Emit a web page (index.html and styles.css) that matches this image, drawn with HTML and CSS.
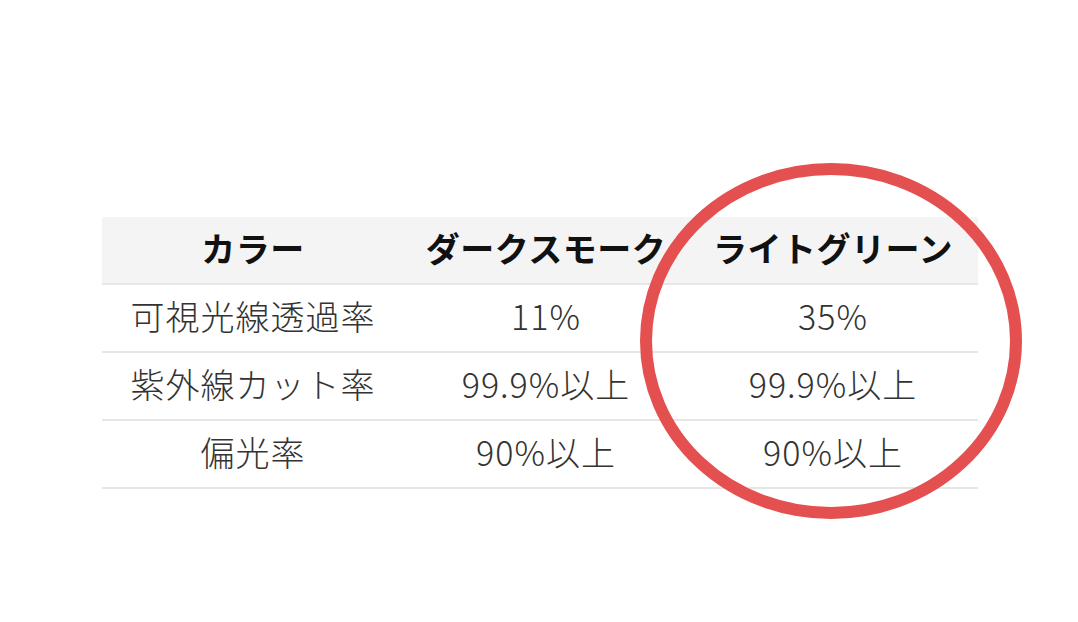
FILE: index.html
```html
<!DOCTYPE html>
<html lang="ja">
<head>
    <meta charset="UTF-8">
    <meta name="viewport" content="width=device-width, initial-scale=1.0">
    <title>カラー比較</title>
    <link rel="stylesheet" href="styles.css">
</head>
<body>
    <div class="wrap">
        <table class="spec-table">
            <thead>
                <tr>
                    <th class="col-label">カラー</th>
                    <th class="col-dark">ダークスモーク</th>
                    <th class="col-green">ライトグリーン</th>
                </tr>
            </thead>
            <tbody>
                <tr>
                    <td>可視光線透過率</td>
                    <td>11%</td>
                    <td>35%</td>
                </tr>
                <tr>
                    <td>紫外線カット率</td>
                    <td>99.9%以上</td>
                    <td>99.9%以上</td>
                </tr>
                <tr>
                    <td>偏光率</td>
                    <td>90%以上</td>
                    <td>90%以上</td>
                </tr>
            </tbody>
        </table>

        <!-- 強調の赤丸 -->
        <svg class="highlight" width="400" height="372" viewBox="0 0 400 372">
            <ellipse cx="200" cy="186" rx="185" ry="172" fill="none" stroke="#e4504f" stroke-width="12"/>
        </svg>
    </div>
</body>
</html>
```

FILE: styles.css
```css
body {
    margin: 0;
    background-color: #ffffff;
    font-family: 'Noto Sans CJK JP', 'Noto Sans', sans-serif;
}

.wrap {
    position: relative;
    width: 1078px;
    height: 622px;
    padding: 217px 0 0 102px;
    box-sizing: border-box;
}

.spec-table {
    width: 876px;
    border-collapse: collapse;
    table-layout: fixed;
}

.col-label {
    width: 302px;
}

.col-dark {
    width: 284px;
}

.spec-table th {
    background-color: #f4f4f4;
    color: #111;
    font-size: 34px;
    font-weight: bold;
    letter-spacing: 0.5px;
    height: 60px;
    padding: 0 0 6px;
    text-align: center;
    border-bottom: 2px solid #e6e6e6;
    white-space: nowrap;
}

.spec-table td {
    color: #333;
    font-size: 34px;
    font-weight: 300;
    letter-spacing: 1px;
    height: 61px;
    padding: 0 0 5px;
    text-align: center;
    border-bottom: 2px solid #e6e6e6;
    white-space: nowrap;
}

.highlight {
    position: absolute;
    left: 631px;
    top: 155px;
}
```
